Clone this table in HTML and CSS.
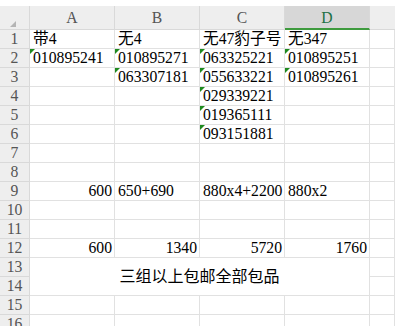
FILE: index.html
```html
<!DOCTYPE html>
<html lang="zh-CN">
<head>
    <meta charset="UTF-8">
    <meta name="viewport" content="width=device-width, initial-scale=1.0">
    <title>Sheet1</title>
    <link rel="stylesheet" href="styles.css">
</head>
<body>
    <div class="sheet">
        <!-- column headers -->
        <div class="corner"><span class="corner-mark"></span></div>
        <div class="col-head">A</div>
        <div class="col-head">B</div>
        <div class="col-head">C</div>
        <div class="col-head active">D</div>
        <div class="col-head blank"></div>

        <div class="row-head">1</div>
        <div class="cell">带4</div>
        <div class="cell">无4</div>
        <div class="cell">无47豹子号</div>
        <div class="cell">无347</div>
        <div class="cell"></div>

        <div class="row-head">2</div>
        <div class="cell txt">010895241</div>
        <div class="cell txt">010895271</div>
        <div class="cell txt">063325221</div>
        <div class="cell txt">010895251</div>
        <div class="cell"></div>

        <div class="row-head">3</div>
        <div class="cell"></div>
        <div class="cell txt">063307181</div>
        <div class="cell txt">055633221</div>
        <div class="cell txt">010895261</div>
        <div class="cell"></div>

        <div class="row-head">4</div>
        <div class="cell"></div>
        <div class="cell"></div>
        <div class="cell txt">029339221</div>
        <div class="cell"></div>
        <div class="cell"></div>

        <div class="row-head">5</div>
        <div class="cell"></div>
        <div class="cell"></div>
        <div class="cell txt">019365111</div>
        <div class="cell"></div>
        <div class="cell"></div>

        <div class="row-head">6</div>
        <div class="cell"></div>
        <div class="cell"></div>
        <div class="cell txt">093151881</div>
        <div class="cell"></div>
        <div class="cell"></div>

        <div class="row-head">7</div>
        <div class="cell"></div>
        <div class="cell"></div>
        <div class="cell"></div>
        <div class="cell"></div>
        <div class="cell"></div>

        <div class="row-head">8</div>
        <div class="cell"></div>
        <div class="cell"></div>
        <div class="cell"></div>
        <div class="cell"></div>
        <div class="cell"></div>

        <div class="row-head">9</div>
        <div class="cell num">600</div>
        <div class="cell">650+690</div>
        <div class="cell">880x4+2200</div>
        <div class="cell">880x2</div>
        <div class="cell"></div>

        <div class="row-head">10</div>
        <div class="cell"></div>
        <div class="cell"></div>
        <div class="cell"></div>
        <div class="cell"></div>
        <div class="cell"></div>

        <div class="row-head">11</div>
        <div class="cell"></div>
        <div class="cell"></div>
        <div class="cell"></div>
        <div class="cell"></div>
        <div class="cell"></div>

        <div class="row-head">12</div>
        <div class="cell num">600</div>
        <div class="cell num">1340</div>
        <div class="cell num">5720</div>
        <div class="cell num">1760</div>
        <div class="cell"></div>

        <!-- A13:D14 merged -->
        <div class="row-head">13</div>
        <div class="cell merged">三组以上包邮全部包品</div>
        <div class="cell"></div>
        <div class="row-head">14</div>
        <div class="cell"></div>

        <div class="row-head">15</div>
        <div class="cell"></div>
        <div class="cell"></div>
        <div class="cell"></div>
        <div class="cell"></div>
        <div class="cell"></div>

        <div class="row-head">16</div>
        <div class="cell"></div>
        <div class="cell"></div>
        <div class="cell"></div>
        <div class="cell"></div>
        <div class="cell"></div>
    </div>
</body>
</html>
```

FILE: styles.css
```css
* {
    margin: 0;
    padding: 0;
    box-sizing: border-box;
}

html, body {
    height: 100%;
    overflow: hidden;
}

body {
    background: #ffffff;
    padding-top: 6px;
    font-family: 'Liberation Serif', 'Noto Sans CJK SC', serif;
    font-size: 15.7px;
    color: #000000;
}

.sheet {
    display: grid;
    grid-template-columns: 30px 85px 85px 85px 85px 1fr;
    grid-template-rows: 24px;
    grid-auto-rows: 19px;
}

.corner,
.col-head,
.row-head {
    background: #eeeeee;
    color: #555555;
    border-right: 1px solid #d9d9d9;
    border-bottom: 1px solid #d9d9d9;
}

.corner {
    position: relative;
}

.corner-mark {
    position: absolute;
    left: 10px;
    top: 15px;
    width: 0;
    height: 0;
    border-left: 6px solid transparent;
    border-bottom: 6px solid #b4b4b4;
}

.col-head {
    display: flex;
    align-items: center;
    justify-content: center;
    padding-top: 1px;
}

.col-head.active {
    background: #d7d7d7;
    color: #1e7145;
    border-bottom: 2px solid #3d9a3d;
}

.col-head.blank {
    border-right: none;
}

.row-head {
    display: flex;
    align-items: flex-end;
    justify-content: center;
    line-height: 18px;
    padding-bottom: 0;
}

.cell {
    position: relative;
    display: flex;
    align-items: flex-end;
    padding: 0 3px 0 3px;
    line-height: 18px;
    white-space: nowrap;
    border-right: 1px solid #e1e1e1;
    border-bottom: 1px solid #e1e1e1;
}

.cell.num {
    justify-content: flex-end;
    padding-right: 2px;
}

/* numbers stored as text get the little green flag */
.cell.txt::before {
    content: '';
    position: absolute;
    left: 0;
    top: 0;
    width: 0;
    height: 0;
    border-top: 5px solid #1e8a1e;
    border-right: 5px solid transparent;
}

.cell.merged {
    grid-column: 2 / 6;
    grid-row: span 2;
    align-items: center;
    justify-content: center;
    font-size: 16px;
}
```
